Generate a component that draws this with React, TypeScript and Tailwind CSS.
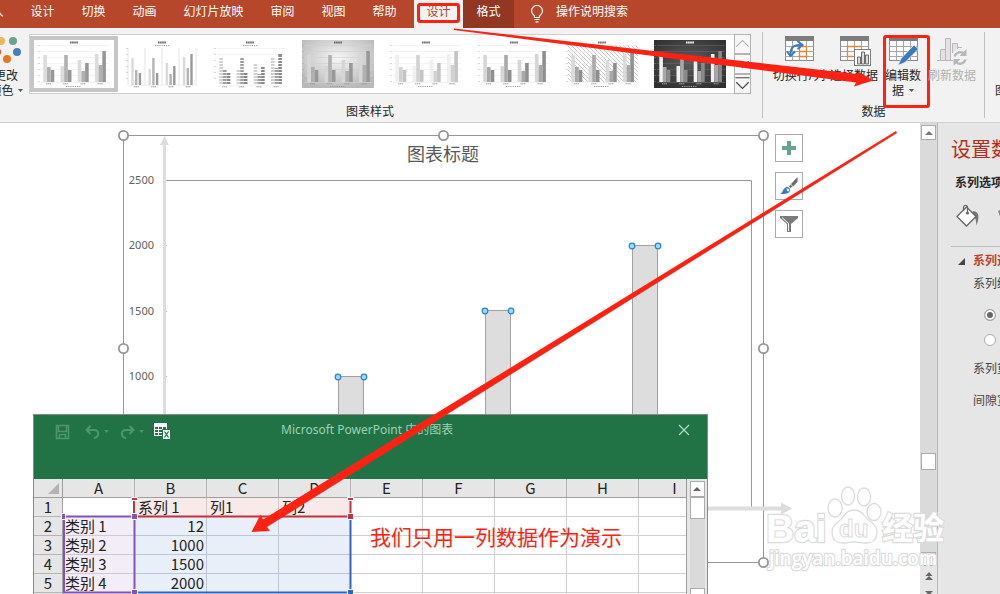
import type { ReactNode } from 'react';

const TABS = ['插入', '设计', '切换', '动画', '幻灯片放映', '审阅', '视图', '帮助'];
const COLUMNS = ['A', 'B', 'C', 'D', 'E', 'F', 'G', 'H', 'I'];
const ROWS = [
  ['', '系列 1', '列1', '列2'],
  ['类别 1', '12', '', ''],
  ['类别 2', '1000', '', ''],
  ['类别 3', '1500', '', ''],
  ['类别 4', '2000', '', ''],
  ['', '', '', ''],
];

// Bar tops of the thumbnail chart, four groups of three series
const THUMB_BARS = [
  [15, 27, 30],
  [26, 15, 30],
  [20, 31, 23],
  [14, 25, 11],
];

type ThumbVariant = 'plain' | 'narrow' | 'striped' | 'gradient' | 'pale' | 'solid' | 'hatch' | 'dark';

const THUMB_VARIANTS: ThumbVariant[] = ['plain', 'narrow', 'striped', 'gradient', 'pale', 'solid', 'hatch', 'dark'];

const THUMB_COLORS: Record<ThumbVariant, string[]> = {
  plain: ['#dcdcdc', '#b0b0b0', '#979797'],
  narrow: ['#dadada', '#b4b4b4', '#9a9a9a'],
  striped: ['#d0d0d0', '#a0a0a0', '#888888'],
  gradient: ['#d6d6d6', '#b0b0b0', '#989898'],
  pale: ['#efefef', '#d2d2d2', '#c4c4c4'],
  solid: ['#d6d6d6', '#a9a9a9', '#8f8f8f'],
  hatch: ['#dadada', '#a9a9a9', '#8f8f8f'],
  dark: ['#f2f2f2', '#a8a8a8', '#8a8a8a'],
};

function StyleThumb({ variant }: { variant: ThumbVariant }) {
  const colors = THUMB_COLORS[variant];
  const low = variant === 'narrow' || variant === 'striped';
  const shift = low ? 3 : 0;
  const bottom = 42 + shift;
  const barWidth = variant === 'narrow' ? 2.4 : 3.6;
  const ink = variant === 'dark' ? '#a8a8a8' : '#999999';
  const grid = variant === 'dark' ? '#666666' : variant === 'gradient' ? '#d0d0d0' : '#ececec';

  return (
    <svg width="72" height="48" viewBox="0 0 72 48" className="shrink-0">
      <defs>
        <radialGradient id="thumbLight" cx="50%" cy="38%" r="65%">
          <stop offset="0" stopColor="#f6f6f6" />
          <stop offset="1" stopColor="#b8b8b8" />
        </radialGradient>
        <radialGradient id="thumbDark" cx="50%" cy="45%" r="65%">
          <stop offset="0" stopColor="#5c5c5c" />
          <stop offset="1" stopColor="#303030" />
        </radialGradient>
        <pattern id="thumbHatch" width="4" height="4" patternUnits="userSpaceOnUse">
          <path d="M0 0L4 4" stroke="#c4c4c4" strokeWidth="0.9" />
        </pattern>
      </defs>
      {variant === 'gradient' && <rect width="72" height="48" fill="url(#thumbLight)" />}
      {variant === 'dark' && <rect width="72" height="48" fill="url(#thumbDark)" />}
      {variant === 'hatch' && <rect x="2" y="5" width="70" height="37" fill="url(#thumbHatch)" />}
      {variant === 'narrow'
        ? [2, 19, 36, 53, 70].map((x) => <path key={x} d={`M${x} 8V45`} stroke="#e4e4e4" strokeWidth="1" />)
        : [5, 11, 17, 23, 29, 35].map((y) => (
            <path key={y} d={`M3 ${y + shift + 0.5}H71`} stroke={grid} strokeWidth="1" opacity="0.6" />
          ))}
      <path d="M32 2.5H40" stroke={variant === 'dark' ? '#ffffff' : '#666666'} strokeWidth="2" strokeDasharray="1.6 0.5" />
      <path d={low ? 'M29 5.5H44' : 'M28 46.5H43'} stroke={ink} strokeWidth="1" strokeDasharray="1.2 1" />
      <path d={`M1 ${5 + shift}V42`} stroke={ink} strokeWidth="2" strokeDasharray="0.8 5.2" opacity="0.5" />
      <path d={`M3 ${bottom + 0.3}H71`} stroke={grid} strokeWidth="0.8" />
      {THUMB_BARS.map((group, g) => (
        <g key={g}>
          {group.map((top, s) => (
            <rect
              key={s}
              x={5.3 + g * 17.2 + s * 3.7}
              y={top + shift}
              width={barWidth}
              height={42 - top}
              fill={colors[s]}
            />
          ))}
          <path d={`M${8 + g * 17.2} ${bottom + 1.8}h5`} stroke={ink} strokeWidth="1" strokeDasharray="1.4 0.4" />
        </g>
      ))}
      {variant === 'striped' &&
        [17, 20, 23, 26, 29, 32, 35, 38, 41, 44].map((y) => (
          <path key={y} d={`M4 ${y + 0.5}H71`} stroke="#ffffff" strokeWidth="1" />
        ))}
    </svg>
  );
}

function SheetIcon({ children }: { children?: ReactNode }) {
  return (
    <svg width="34" height="32" viewBox="0 0 34 32">
      <rect x="3.5" y="2.5" width="28" height="24" fill="#fff" stroke="#8a8a8a" />
      <rect x="3" y="2" width="29" height="5" fill="#7d7d7d" />
      <path d="M3.5 12.5h28M3.5 17.5h28M3.5 22.5h28M10.5 7v19.5M17.5 7v19.5M24.5 7v19.5" stroke="#a6a6a6" fill="none" />
      {children}
    </svg>
  );
}

function DataButton({ icon, children, className }: { icon: ReactNode; children: ReactNode; className: string }) {
  return (
    <button type="button" className={`relative flex shrink-0 flex-col items-center whitespace-nowrap leading-[15px] ${className}`}>
      <span className="flex h-[34px] items-start">{icon}</span>
      {children}
    </button>
  );
}

function TitleTabs() {
  return (
    <header className="flex h-7 shrink-0 overflow-hidden whitespace-nowrap bg-[#b7472a] text-white">
      <nav className="-ml-[34px] flex shrink-0">
        {TABS.map((tab) => (
          <button key={tab} type="button" className={`h-6 shrink-0 ${tab.length > 2 ? 'w-[87px]' : 'w-[51px]'}`}>
            {tab}
          </button>
        ))}
      </nav>
      <button type="button" className="relative ml-1 w-[49px] shrink-0 bg-[#f2f2f2] pb-1 text-[#b7472a]">
        设计
        <span className="absolute left-[3px] top-[3px] h-5 w-[43px] rounded-[3px] border-3 border-[#ff2212]" />
      </button>
      <button type="button" className="w-[51px] shrink-0 bg-[#923822] pb-1">
        格式
      </button>
      <button type="button" className="flex h-6 shrink-0 items-center gap-3 pl-4">
        <svg width="14" height="18" viewBox="0 0 14 18" fill="none" stroke="#fff" strokeWidth="1.2" className="mt-1">
          <path d="M4.5 12.5V11C3 9.5 1.5 8.4 1.5 6a5.5 5.5 0 0 1 11 0c0 2.4-1.5 3.500-3 5v1.500zM4.500 14.500h5M5.500 16.800h3" />
        </svg>
        操作说明搜索
      </button>
    </header>
  );
}

function Ribbon() {
  return (
    <section className="flex h-[95px] shrink-0 overflow-hidden border-b border-[#d0d0d0] bg-[#f2f2f2] pt-[6px] text-[#262626]">
      <div className="-ml-[22px] flex shrink-0 flex-col pr-[11px]">
        <div className="flex h-[70px] items-start">
          <button type="button" className="ml-[5px] flex w-[46px] shrink-0 flex-col items-center leading-[15px]">
            <svg width="46" height="34" viewBox="-17 34 46 34">
              <circle cx="1" cy="41" r="4" fill="#ebb562" />
              <circle cx="13" cy="41" r="4" fill="#68a490" />
              <circle cx="17" cy="52" r="4" fill="#4a7ebb" />
              <circle cx="7" cy="59" r="4" fill="#e8761e" />
              <circle cx="-3" cy="52" r="4" fill="#d35230" />
            </svg>
            <span>更改</span>
            <span className="flex items-center gap-1">
              颜色
              <svg width="5" height="3" viewBox="0 0 5 3"><path d="M0 0h5L2.500 3z" fill="#555" /></svg>
            </span>
          </button>
          <div className="flex h-[60px] border border-[#d0d0d0] bg-white">
            <div className="flex pt-px">
              {THUMB_VARIANTS.map((variant, idx) => (
                <button
                  key={variant}
                  type="button"
                  className={`flex h-14 w-[88px] items-center justify-center ${idx === 0 ? 'border-4 border-[#c6c6c6]' : ''}`}
                >
                  <StyleThumb variant={variant} />
                </button>
              ))}
            </div>
            <div className="-my-px -mr-px flex w-[17px] flex-col text-[#444]">
              {['M1 12L8 5L15 12', 'M1 6L8 13L15 6', 'M0 2H16M1 7L8 14L15 7'].map((d, idx) => (
                <button key={d} type="button" className="flex h-5 items-center justify-center border border-[#b4b4b4] bg-[#f7f7f7]">
                  <svg width="15" height="16" viewBox="0 0 16 18" fill="none" stroke={idx === 0 ? '#b4b4b4' : '#444'} strokeWidth="1.3">
                    <path d={d} />
                  </svg>
                </button>
              ))}
            </div>
          </div>
        </div>
        <span className="pl-[11px] text-center leading-4">图表样式</span>
      </div>

      <div className="-mt-[2px] mb-1 flex shrink-0 flex-col border-x border-[#c0c0c0] pt-[2px]">
        <div className="flex h-[70px] w-[221px] shrink-0 pl-2">
          <DataButton
            className="w-14"
            icon={
              <SheetIcon>
                <path d="M17.500 12.500h7v10h-7zM17.500 17.500h7" fill="none" stroke="#e8832e" strokeWidth="1.3" />
                <path d="M8.500 21C8.500 13 12 10.500 19 11" fill="none" stroke="#3c7abf" strokeWidth="2" />
                <path d="M15.500 7l5 4-5 4M5 17.500l3.500 4.500 4.500-4.500" fill="none" stroke="#3c7abf" strokeWidth="2" />
              </SheetIcon>
            }
          >
            <span>切换行/列</span>
          </DataButton>
          <DataButton
            className="w-[54px]"
            icon={
              <SheetIcon>
                <path d="M10.500 12.500h14M10.500 12.500v10h6" fill="none" stroke="#e8832e" strokeWidth="1.3" />
                <rect x="17.500" y="15.500" width="16" height="16" fill="#fff" stroke="#7d7d7d" />
                <path d="M20.500 30v-7h3v7zM24.500 30V18h3v12zM28.500 30v-9h3v9z" fill="#ddd" stroke="#6b6b6b" />
              </SheetIcon>
            }
          >
            <span>选择数据</span>
          </DataButton>
          <DataButton
            className="w-11"
            icon={
              <SheetIcon>
                <path d="M12 31.500l3-7L28 11l4.500 4L19 28.500z" fill="#3c7abf" stroke="#f2f2f2" strokeWidth="0.8" />
              </SheetIcon>
            }
          >
            <span>编辑数</span>
            <span className="flex items-center gap-[5px]">
              据
              <svg width="5" height="3" viewBox="0 0 5 3"><path d="M0 0h5L2.500 3z" fill="#555" /></svg>
            </span>
            <span className="absolute left-[2px] top-px h-[73px] w-[47px] rounded-[3px] border-3 border-[#ff2212]" />
          </DataButton>
          <DataButton
            className="w-[54px] text-[#b1b1b1]"
            icon={
              <svg width="30" height="32" viewBox="0 0 30 32">
                <path d="M0 26.500h16M3.500 26V15.500h5V26M8.500 26V4.500h5V26M15.500 19V9.500h5V15M21 13.500h4" fill="#e4e0e4" stroke="#b8b8b8" />
                <circle cx="23" cy="24" r="7.500" fill="#f2f2f2" />
                <path d="M17.500 22.500a6 6 0 0 1 10-2.500M28.500 25.500a6 6 0 0 1-10 2.500" fill="none" stroke="#b8b8b8" strokeWidth="2.400" />
                <path d="M29.500 15v7h-7zM16.500 32v-7h7z" fill="#b8b8b8" />
              </svg>
            }
          >
            <span>刷新数据</span>
          </DataButton>
        </div>
        <span className="text-center leading-4">数据</span>
      </div>
      <button type="button" className="ml-[10px] mt-[26px] h-4 shrink-0 self-center leading-4">图表</button>
    </section>
  );
}

const BARS = [
  { x: 338, top: 377 },
  { x: 485, top: 311 },
  { x: 632, top: 246 },
];

const AXIS = [
  { label: '2500', y: 180 },
  { label: '2000', y: 245 },
  { label: '1500', y: 311 },
  { label: '1000', y: 376 },
];

function Chart() {
  return (
    <svg width="920" height="471" viewBox="0 123 920 471" className="block">
      <rect x="123.500" y="135.500" width="640" height="427" fill="none" stroke="#969696" />
      <path d="M164.500 594V144" stroke="#ddd" strokeWidth="3" />
      <path d="M160 145l4.500-9 4.500 9z" fill="#ddd" />
      <path d="M166 180.500H751.500V508" fill="none" stroke="#9a9a9a" />
      <path d="M164 508.500H782" stroke="#ddd" strokeWidth="4" />
      <path d="M781 502.500l11.500 6-11.500 6z" fill="#ddd" />
      {AXIS.map(({ label, y }) => (
        <g key={label}>
          <text x="154" y={y + 4} textAnchor="end" fontSize="11" fill="#606060">{label}</text>
          <path d={`M166 ${y + 0.5}h1`} stroke="#bbb" />
        </g>
      ))}
      <text x="443" y="161" textAnchor="middle" fontSize="18" fill="#595959">图表标题</text>
      {BARS.map(({ x, top }) => (
        <g key={x}>
          <rect x={x + 0.5} y={top - 0.5} width="25" height={508 - top} fill="#ddd" stroke="#a0a0a0" />
          <circle cx={x} cy={top} r="2.800" fill="#a9d5f5" stroke="#1f86d8" strokeWidth="1.200" />
          <circle cx={x + 26} cy={top} r="2.800" fill="#a9d5f5" stroke="#1f86d8" strokeWidth="1.200" />
        </g>
      ))}
      {[[123.5, 135.5], [443.5, 135.5], [763.5, 135.5], [123.5, 348.5], [763.5, 348.5], [763.5, 562.5]].map(([cx, cy]) => (
        <circle key={`${cx}-${cy}`} cx={cx} cy={cy} r="4.600" fill="#fff" stroke="#969696" strokeWidth="1.800" />
      ))}
    </svg>
  );
}

function ChartTools() {
  const box = 'flex size-7 items-center justify-center border border-[#ababab] bg-white';
  return (
    <div className="absolute left-[775px] top-[11px] flex flex-col gap-[10px]">
      <button type="button" aria-label="图表元素" className={box}>
        <svg width="14" height="14" viewBox="0 0 14 14"><path d="M5 0h4v5h5v4H9v5H5V9H0V5h5z" fill="#68a490" /></svg>
      </button>
      <button type="button" aria-label="图表样式" className={box}>
        <svg width="20" height="20" viewBox="0 0 20 20">
          <path d="M18.500 1v5l-4.500 4.500-2-2.500z" fill="#6b6b6b" />
          <path d="M11.500 8.500l2 2-2 1.500-1.500-1.500z" fill="#6b6b6b" />
          <path d="M1 18c3-1 2.500-5 5.500-6.500 2-1 4.500 0 4.500 2.500 0 4-5 4-10 4z" fill="#3c7abf" />
          <path d="M7 12.500c1.500 0 0 2.500 2.500 3 1.500-2 .5-3-2.500-3z" fill="#fff" />
        </svg>
      </button>
      <button type="button" aria-label="图表筛选器" className={box}>
        <svg width="18" height="16" viewBox="0 0 18 16">
          <path d="M0 0h18v2l-7 6v8H7V8L0 2z" fill="#7a7a7a" />
          <path d="M2 1.500l6.500 6V15" fill="none" stroke="#fff" />
        </svg>
      </button>
    </div>
  );
}

function cellClass(row: number, col: number) {
  if (row === 0 && col >= 1 && col <= 3) return 'bg-[#f9eaea] pl-[3px] text-left border-[#d8c8c8]';
  if (row >= 1 && row <= 4 && col === 0) return 'bg-[#f3edf8] pl-[2px] text-left border-[#cfc8da]';
  if (row >= 1 && row <= 4 && col <= 3) return 'bg-[#e9eff9] pr-[2px] text-right border-[#bcc6d6]';
  return 'bg-white border-[#d0d0d0]';
}

function DataSheet() {
  return (
    <div className="absolute left-[33px] top-[291px] w-[675px] border border-[#8a8a8a] bg-[#e6e6e6]">
      <div className="flex h-16 items-start bg-[#217346] pt-[6px] text-[#9fd0b4]">
        <div className="flex w-[247px] items-center pl-[21px] pt-[2px] text-[#5f9f7c]">
          <button type="button" aria-label="保存">
            <svg width="16" height="16" viewBox="0 0 16 16" fill="none" stroke="#4f946f" strokeWidth="1.600">
              <path d="M1.500 1.500h12v13h-12zM3.500 1.500v6h8v-6M4.500 14.500v-4h6v4" />
            </svg>
          </button>
          <button type="button" aria-label="撤消" className="ml-[14px] flex items-center gap-1">
            <svg width="15" height="14" viewBox="0 0 15 14" fill="none" stroke="#4f946f" strokeWidth="2">
              <path d="M5.500 1L1.500 5l4 4M1.500 5h7.500c5.500 0 5.500 7 0 8" />
            </svg>
            <svg width="5" height="3" viewBox="0 0 5 3"><path d="M0 0h5L2.500 3z" fill="#4f946f" /></svg>
          </button>
          <button type="button" aria-label="恢复" className="ml-[11px] flex items-center gap-1">
            <svg width="15" height="14" viewBox="0 0 15 14" fill="none" stroke="#4f946f" strokeWidth="2">
              <path d="M9.500 1l4 4-4 4M13.500 5H6C.5 5 .5 12 6 13" />
            </svg>
            <svg width="5" height="3" viewBox="0 0 5 3"><path d="M0 0h5L2.500 3z" fill="#4f946f" /></svg>
          </button>
          <button type="button" aria-label="在 Excel 中编辑数据" className="ml-[10px]">
            <svg width="17" height="17" viewBox="0 0 17 17">
              <path d="M0 0h13v13H0z" fill="#fff" />
              <path d="M1 4h3v2H1zM5 4h3v2H5zM9 4h3v2H9zM1 7h3v2H1zM5 7h3v2H5zM9 7h3v2H9zM1 10h3v2H1zM5 10h3v2H5z" fill="#217346" />
              <path d="M8.500 6.500h8v10h-8z" fill="#fff" stroke="#217346" />
              <path d="M10.500 8.500l4 6M14.500 8.500l-4 6" stroke="#217346" strokeWidth="1.300" />
            </svg>
          </button>
        </div>
        <span className="flex-1 whitespace-nowrap leading-[18px]">Microsoft PowerPoint 中的图表</span>
        <button type="button" aria-label="关闭" className="mr-[17px] mt-[3px]">
          <svg width="12" height="12" viewBox="0 0 12 12" stroke="#b5dcc6" strokeWidth="1.200"><path d="M1 1l10 10M11 1L1 11" /></svg>
        </button>
      </div>

      <div className="flex">
        <div className="relative min-w-0 flex-1 overflow-hidden border-r border-[#9a9a9a]">
          <table className="w-[677px] table-fixed border-separate border-spacing-0 whitespace-nowrap font-['Noto_Sans_CJK_SC',sans-serif] text-[15px] leading-[18px] text-[#222]">
            <thead>
              <tr>
                <th className="h-[19px] w-[29px] border-b border-r border-[#9f9f9f] p-0">
                  <svg width="28" height="18" viewBox="0 0 28 18" className="block"><path d="M25 4v11H14z" fill="#b4b4b4" /></svg>
                </th>
                {COLUMNS.map((name) => (
                  <th key={name} scope="col" className="h-[19px] border-b border-r border-b-[#9f9f9f] border-r-[#b4b4b4] p-0 font-normal">
                    {name}
                  </th>
                ))}
              </tr>
            </thead>
            <tbody>
              {ROWS.map((row, r) => (
                <tr key={r}>
                  <th scope="row" className="h-[19px] border-b border-r border-b-[#b4b4b4] border-r-[#9f9f9f] p-0 font-normal">
                    {r + 1}
                  </th>
                  {COLUMNS.map((name, c) => (
                    <td key={name} className={`h-[19px] border-b border-r p-0 ${cellClass(r, c)}`}>
                      {row[c]}
                    </td>
                  ))}
                </tr>
              ))}
            </tbody>
          </table>
          {/* coloured outlines of the chart's source ranges */}
          <svg width="652" height="133" viewBox="34 479 652 133" className="absolute left-0 top-0">
            <g fill="none" strokeWidth="2">
              <path d="M134 498.500V516.500H350.500V498.500" stroke="#c0333f" />
              <path d="M64 516.500H134.500V592.500H64z" stroke="#8055b8" />
              <path d="M135 592.500H350.500V519" stroke="#2f66c4" />
            </g>
            <g stroke="#fff" strokeWidth="1">
              <path d="M131.500 497.500h6v3h-6zM347.500 497.500h6v3h-6z" fill="#c0333f" />
              <path d="M347.500 513.500h6v6h-6z" fill="#c0333f" />
              <path d="M131.500 513.500h6v6h-6zM131.500 589.500h6v6h-6zM61.500 513.500h4v6h-4z" fill="#8055b8" />
              <path d="M347.500 589.500h6v6h-6z" fill="#2f66c4" />
            </g>
          </svg>
          <p className="absolute left-[336px] top-[43px] whitespace-nowrap text-[21px] leading-[30px] text-[#ff2212]">
            我们只用一列数据作为演示
          </p>
        </div>
        <div className="flex w-5 shrink-0 flex-col items-center pt-[2px]">
          <div className="flex w-[15px] flex-1 flex-col bg-[#dadada]">
            <button type="button" aria-label="向上滚动" className="flex h-4 items-center justify-center border border-[#ababab] bg-white">
              <svg width="8" height="4" viewBox="0 0 8 4"><path d="M4 0l4 4H0z" fill="#666" /></svg>
            </button>
            <div className="h-[22px] border border-[#ababab] bg-white" />
            <button type="button" aria-label="向下滚动" className="mt-auto h-6 border border-[#ababab] bg-white" />
          </div>
        </div>
      </div>
    </div>
  );
}

function SlideScrollbar() {
  const box = 'flex w-[15px] shrink-0 items-center justify-center border border-[#ababab] bg-white';
  return (
    <div className="flex w-[17px] shrink-0 flex-col items-center bg-[#dadada] pt-[2px]">
      <button type="button" aria-label="向上" className={`${box} h-[15px]`}>
        <svg width="8" height="4" viewBox="0 0 8 4"><path d="M4 0l4 4H0z" fill="#777" /></svg>
      </button>
      <div className="flex w-full flex-1 flex-col items-center justify-end pb-[82px]">
        <div className={`${box} h-[17px]`} />
      </div>
      <button type="button" aria-label="向下" className={`${box} h-[14px]`}>
        <svg width="5" height="4" viewBox="0 0 5 4"><path d="M0 0h5L2.500 4z" fill="#777" /></svg>
      </button>
      <div className="flex h-7 w-full shrink-0 flex-col items-center gap-[10px] bg-[#e6e6e6] pt-[6px]">
        <svg width="8" height="9" viewBox="0 0 8 9" className="shrink-0"><path d="M4 0l3.500 4h-7zM4 4l4 4H0z" fill="#666" /></svg>
        <svg width="8" height="9" viewBox="0 0 8 9" className="shrink-0"><path d="M0 0h8L4 4zM.5 4h7L4 8z" fill="#666" /></svg>
      </div>
    </div>
  );
}

function FormatPane() {
  const radio = 'block size-3 shrink-0 appearance-none rounded-full border border-[#ababab] bg-white';
  return (
    <aside className="w-[63px] shrink-0 overflow-hidden whitespace-nowrap border-l border-[#b8b8b8] bg-[#e6e6e6] pl-[13px] text-[#444]">
      <h2 className="mt-[13px] text-[20px] leading-[28px] text-[#b52f1a]">设置数据系列格式</h2>
      <h3 className="ml-1 mt-[11px] font-bold leading-4 text-[#262626]">系列选项</h3>
      <div className="mt-[13px] flex gap-[16px] pl-[5px]">
        <svg width="25" height="24" viewBox="0 0 25 24" className="shrink-0">
          <path d="M17 7c6 1 7 5 3.500 14.500C20 16 20 14 16 10z" fill="#777" />
          <path d="M1 12.500L10.500 3l9.500 9.500-9.500 9.500z" fill="#fff" stroke="#666" strokeWidth="1.300" />
          <path d="M7.500 7V3.500c0-3 4-3 4 0V9" fill="none" stroke="#666" strokeWidth="1.200" />
          <circle cx="11.500" cy="9" r="1.600" fill="#666" />
        </svg>
        <svg width="20" height="20" viewBox="0 0 20 20" className="shrink-0"><path d="M1 7l9-5 9 5-4 11H5z" fill="#888" /></svg>
      </div>
      <div className="mt-[18px] border-t border-[#bdbdbd] pt-[6px]">
        <h4 className="flex items-center gap-2 pl-[7px] font-bold leading-4 text-[#c0412a]">
          <svg width="7" height="7" viewBox="0 0 7 7" className="shrink-0"><path d="M7 0v7H0z" fill="#444" /></svg>
          系列选项
        </h4>
        <p className="mt-[7px] pl-[22px] leading-4">系列绘制在</p>
        <div className="mt-[17px] flex flex-col gap-[13px] pl-[33px]">
          <label className="flex items-center gap-2 leading-3">
            <input
              type="radio"
              name="axis"
              defaultChecked
              className={`${radio} checked:bg-[#666] checked:shadow-[inset_0_0_0_2px_white]`}
            />
            主坐标轴
          </label>
          <label className="flex items-center gap-2 leading-3">
            <input type="radio" name="axis" className={radio} />
            次坐标轴
          </label>
        </div>
        <p className="mt-[15px] pl-[22px] leading-4">系列重叠</p>
        <p className="mt-4 pl-[22px] leading-4">间隙宽度</p>
      </div>
    </aside>
  );
}

function Watermark() {
  return (
    <svg width="190" height="100" viewBox="765 480 190 100" className="pointer-events-none absolute left-[765px] top-[480px]">
      <g fill="#fff" stroke="#dcdcdc" strokeWidth="2.400" paintOrder="stroke" fontWeight="700">
        <text x="766" y="542" fontSize="39" fontFamily="Liberation Sans">Bai</text>
        <text x="882" y="539" fontSize="31" fontFamily="Noto Sans CJK SC">经验</text>
        <text x="769" y="565" fontSize="19" fontFamily="Open Sans" fontWeight="600">jingyan.baidu.com</text>
      </g>
      <g fill="#fff" stroke="#dcdcdc" strokeWidth="1.300">
        <ellipse cx="835" cy="508" rx="7" ry="9" />
        <ellipse cx="848" cy="496" rx="6.500" ry="9" />
        <ellipse cx="864" cy="497" rx="6.500" ry="9" />
        <ellipse cx="874" cy="512" rx="7" ry="8.500" />
        <path d="M854 510c-9 0-10 8-16 12-9 6-8 21 5 21 6 0 7-1 11-1s6 1 12 1c13 0 14-15 5-21-6-4-8-12-17-12z" />
        <text x="839" y="537" fontSize="24" fontWeight="700" fontFamily="Liberation Sans" strokeWidth="1">du</text>
      </g>
    </svg>
  );
}

// Red pointers drawn over the whole window
function Arrows() {
  return (
    <svg width="1000" height="594" viewBox="0 0 1000 594" className="pointer-events-none absolute left-0 top-0" fill="#ff2212">
      <path d="M454 28.500L857 74L859 72L873 80.500L854 86.500L856 82.500L454 30z" />
      <path d="M896 131L263 519.500L260.500 514.500L251.500 532L270 531L267 527L897 133z" />
    </svg>
  );
}

export default function App() {
  return (
    <div className="relative flex h-screen flex-col overflow-hidden bg-white font-['Noto_Sans','Noto_Sans_CJK_SC',sans-serif] text-xs">
      <TitleTabs />
      <Ribbon />
      <main className="flex min-h-0 flex-1">
        <div className="relative min-w-0 flex-1 overflow-hidden bg-white">
          <Chart />
          <ChartTools />
          <DataSheet />
        </div>
        <SlideScrollbar />
        <FormatPane />
      </main>
      <Watermark />
      <Arrows />
    </div>
  );
}
